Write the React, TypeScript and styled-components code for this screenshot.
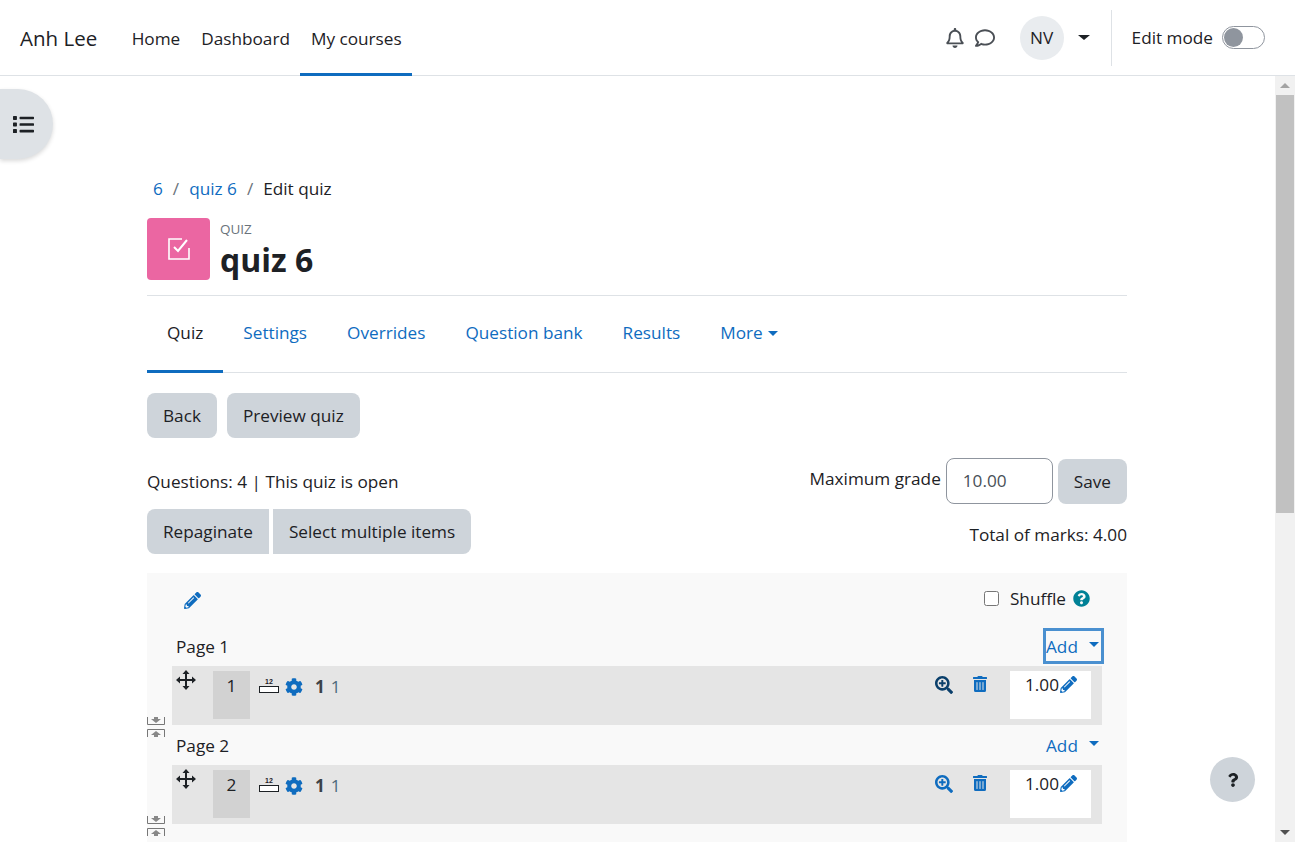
import styled, { createGlobalStyle } from "styled-components"
import { FaCog, FaList, FaPencilAlt, FaQuestion, FaQuestionCircle, FaRegBell, FaRegComment, FaSearchPlus, FaTrashAlt } from "react-icons/fa"

const BLUE = "#0f6cbf"

const GlobalStyle = createGlobalStyle`
    html, body {
        margin: 0;
        height: 100%;
        overflow: hidden;
    }
    body {
        font-family: "Open Sans", "Noto Sans", "Liberation Sans", sans-serif;
        font-size: 17.2px;
        color: #1d2125;
        background: #fff;
    }
`

function MoveIcon() {
    return (
        <svg width="20" height="20" viewBox="0 0 20 20" fill="#1d2125">
            <rect x="9" y="3" width="2" height="14" />
            <rect x="3" y="9" width="14" height="2" />
            <path d="M10 0l3.5 4h-7zM10 20l-3.5-4h7zM0 10l4-3.5v7zM20 10l-4 3.5v-7z" />
        </svg>
    )
}

function PageNumberIcon() {
    return (
        <svg width="20" height="16" viewBox="0 0 20 16">
            <text x="10" y="6" fontSize="7" fontWeight="700" textAnchor="middle" fontFamily="Liberation Sans" fill="#1d2125">12</text>
            <rect x="0.5" y="8.5" width="19" height="6" fill="#fff" stroke="#1d2125" />
        </svg>
    )
}

function SplitIcon({ up }: { up?: boolean }) {
    return (
        <svg width="18" height="8" viewBox="0 0 18 8" fill="none">
            {up ? (
                <>
                    <path d="M0.5 8V0.5H17.5V8" stroke="#777" />
                    <path d="M9 2l5 4H11v2H7V6H4z" fill="#888" />
                </>
            ) : (
                <>
                    <path d="M0.5 0V7.5H17.5V0" stroke="#777" />
                    <path d="M9 6l5-4H11V0H7v2H4z" fill="#888" />
                </>
            )}
        </svg>
    )
}

function QuizIcon() {
    return (
        <svg width="24" height="24" viewBox="0 0 24 24" fill="none" stroke="#fff" strokeWidth="1.6">
            <path d="M15 2H2v20h20V11" />
            <path d="M7 10l4 4 9-11" strokeWidth="2" />
        </svg>
    )
}

type Question = { slot: number; dark?: boolean }

function QuestionBlock({ slot, dark }: Question) {
    return (
        <>
            <PageRow>
                <PageLabel>Page {slot}</PageLabel>
                <AddMenu $focused={dark}>Add<Caret /></AddMenu>
            </PageRow>
            <SlotRow>
                <MoveHandle><MoveIcon /></MoveHandle>
                <SlotNumber>{slot}</SlotNumber>
                <PageNumberWrap><PageNumberIcon /></PageNumberWrap>
                <CogLink><FaCog /></CogLink>
                <QuestionName><strong>1</strong><span>1</span></QuestionName>
                <PreviewLink $dark={dark}><FaSearchPlus /></PreviewLink>
                <TrashLink><FaTrashAlt /></TrashLink>
                <MarkBox>1.00<MarkPen><FaPencilAlt /></MarkPen></MarkBox>
                <SplitIcons>
                    <SplitIcon />
                    <SplitIcon up />
                </SplitIcons>
            </SlotRow>
        </>
    )
}

export default function App() {
    return (
        <Page>
            <GlobalStyle />
            <Navbar>
                <Brand>Anh Lee</Brand>
                <PrimaryNav>
                    <NavItem>Home</NavItem>
                    <NavItem>Dashboard</NavItem>
                    <NavItem $active>My courses</NavItem>
                </PrimaryNav>
                <NavRight>
                    <NavIcon><FaRegBell /></NavIcon>
                    <NavIcon><FaRegComment /></NavIcon>
                    <Avatar>NV</Avatar>
                    <UserCaret />
                    <Divider />
                    <EditLabel>Edit mode</EditLabel>
                    <Toggle><ToggleKnob /></Toggle>
                </NavRight>
            </Navbar>

            <Body>
                <Scroller>
                    <DrawerToggle><FaList /></DrawerToggle>
                    <Content>
                        <Breadcrumb>
                            <Crumb>6</Crumb>
                            <Slash>/</Slash>
                            <Crumb>quiz 6</Crumb>
                            <Slash>/</Slash>
                            <span>Edit quiz</span>
                        </Breadcrumb>
                        <Heading>
                            <ActivityIcon><QuizIcon /></ActivityIcon>
                            <div>
                                <ActivityType>QUIZ</ActivityType>
                                <Title>quiz 6</Title>
                            </div>
                        </Heading>
                        <Tabs>
                            <Tab $active>Quiz</Tab>
                            <Tab>Settings</Tab>
                            <Tab>Overrides</Tab>
                            <Tab>Question bank</Tab>
                            <Tab>Results</Tab>
                            <Tab>More<TabCaret /></Tab>
                        </Tabs>
                        <ActionRow>
                            <Button>Back</Button>
                            <Button>Preview quiz</Button>
                        </ActionRow>
                        <InfoRow>
                            <InfoText>Questions: 4 | This quiz is open</InfoText>
                            <GradeForm>
                                <GradeLabel>Maximum grade</GradeLabel>
                                <GradeInput>10.00</GradeInput>
                                <Button>Save</Button>
                            </GradeForm>
                        </InfoRow>
                        <ToolRow>
                            <JoinedButtons>
                                <Button>Repaginate</Button>
                                <Button>Select multiple items</Button>
                            </JoinedButtons>
                            <Total>Total of marks: 4.00</Total>
                        </ToolRow>
                        <Section>
                            <SectionHead>
                                <SectionPen><FaPencilAlt /></SectionPen>
                                <Shuffle>
                                    <ShuffleBox type="checkbox" />
                                    Shuffle
                                    <HelpIcon><FaQuestionCircle /></HelpIcon>
                                </Shuffle>
                            </SectionHead>
                            <QuestionBlock slot={1} dark />
                            <QuestionBlock slot={2} />
                        </Section>
                    </Content>
                    <HelpButton><FaQuestion /></HelpButton>
                </Scroller>
                <Scrollbar>
                    <ArrowUp />
                    <Thumb />
                    <ArrowDown />
                </Scrollbar>
            </Body>
        </Page>
    )
}

const Page = styled.div`
    height: 842px;
    display: flex;
    flex-direction: column;
    overflow: hidden;
`

const Navbar = styled.header`
    height: 75px;
    flex: none;
    display: flex;
    align-items: stretch;
    border-bottom: 1px solid #dee2e6;
    padding: 0 30px 0 20px;
`

const Brand = styled.div`
    font-size: 20.5px;
    line-height: 77px;
    margin-right: 24px;
`

const PrimaryNav = styled.nav`
    display: flex;
`

const NavItem = styled.div<{ $active?: boolean }>`
    padding: 0 10.5px;
    line-height: 77px;
    border-bottom: 3px solid ${p => (p.$active ? BLUE : "transparent")};
    margin-bottom: -1px;
`

const NavRight = styled.div`
    margin-left: auto;
    display: flex;
    align-items: center;
`

const NavIcon = styled.div`
    width: 20px;
    height: 22px;
    margin-right: 10px;
    color: #4a4f55;
    font-size: 20px;
    display: flex;
    align-items: center;
    justify-content: center;
`

const Avatar = styled.div`
    width: 44px;
    height: 44px;
    border-radius: 50%;
    background: #e9ecef;
    margin-left: 15px;
    display: flex;
    align-items: center;
    justify-content: center;
`

const UserCaret = styled.div`
    margin-left: 14px;
    border-top: 5px solid #1d2125;
    border-left: 6px solid transparent;
    border-right: 6px solid transparent;
`

const Divider = styled.div`
    width: 1px;
    height: 56px;
    background: #dee2e6;
    margin: 0 20px 0 21px;
`

const EditLabel = styled.div`
    margin-right: 9px;
`

const Toggle = styled.div`
    width: 43px;
    height: 23px;
    border: 1px solid #8f959e;
    border-radius: 12px;
    box-sizing: border-box;
    padding: 1px;
`

const ToggleKnob = styled.div`
    width: 19px;
    height: 19px;
    border-radius: 50%;
    background: #8f959e;
`

const Body = styled.div`
    flex: 1;
    display: flex;
    min-height: 0;
`

const Scroller = styled.main`
    flex: 1;
    position: relative;
    overflow: hidden;
`

const DrawerToggle = styled.div`
    position: absolute;
    left: 0;
    top: 13px;
    width: 53px;
    height: 70px;
    background: #dee2e6;
    border-radius: 0 35px 35px 0;
    box-shadow: 0 2px 4px rgba(0, 0, 0, 0.15);
    display: flex;
    align-items: center;
    padding-left: 13px;
    box-sizing: border-box;
    font-size: 21px;
    color: #1d2125;
`

const Content = styled.div`
    width: 980px;
    margin-left: 147px;
    padding-top: 100px;
`

const Breadcrumb = styled.div`
    display: flex;
    height: 26px;
    line-height: 26px;
    padding-left: 6px;
`

const Crumb = styled.span`
    color: ${BLUE};
`

const Slash = styled.span`
    color: #6a737b;
    margin: 0 10px;
`

const Heading = styled.div`
    display: flex;
    gap: 10px;
    margin-top: 16px;
    height: 77px;
    border-bottom: 1px solid #dee2e6;
`

const ActivityIcon = styled.div`
    width: 63px;
    height: 62px;
    background: #eb66a2;
    border-radius: 4px;
    display: flex;
    align-items: center;
    justify-content: center;
`

const ActivityType = styled.div`
    font-size: 13.5px;
    color: #6a737b;
    line-height: 20px;
    margin-top: 1px;
`

const Title = styled.h1`
    margin: 0;
    font-size: 32px;
    font-weight: 700;
    line-height: 41px;
`

const Tabs = styled.div`
    display: flex;
    height: 76px;
    border-bottom: 1px solid #dee2e6;
`

const Tab = styled.div<{ $active?: boolean }>`
    padding: 0 20px;
    line-height: 73px;
    height: 77px;
    box-sizing: border-box;
    color: ${p => (p.$active ? "#1d2125" : BLUE)};
    border-bottom: 3px solid ${p => (p.$active ? BLUE : "transparent")};
`

const TabCaret = styled.span`
    display: inline-block;
    margin-left: 5px;
    vertical-align: 3px;
    border-top: 5px solid ${BLUE};
    border-left: 5px solid transparent;
    border-right: 5px solid transparent;
`

const Button = styled.div`
    height: 45px;
    line-height: 45px;
    padding: 0 16px;
    background: #ced4da;
    border-radius: 8px;
    white-space: nowrap;
`

const ActionRow = styled.div`
    display: flex;
    gap: 10px;
    margin-top: 20px;
`

const InfoRow = styled.div`
    display: flex;
    justify-content: space-between;
    align-items: center;
    margin-top: 20px;
    height: 46px;
`

const InfoText = styled.div``

const GradeForm = styled.div`
    display: flex;
    align-items: center;
`

const GradeLabel = styled.div`
    margin: -6px 5px 0 0;
`

const GradeInput = styled.div`
    width: 107px;
    height: 46px;
    box-sizing: border-box;
    border: 1px solid #8f959e;
    border-radius: 8px;
    padding-left: 16px;
    line-height: 44px;
    color: #495057;
    margin-right: 5px;
`

const ToolRow = styled.div`
    display: flex;
    justify-content: space-between;
    margin-top: 5px;
`

const JoinedButtons = styled.div`
    display: flex;
    gap: 4px;
    & > :first-child {
        border-radius: 8px 0 0 8px;
    }
    & > :last-child {
        border-radius: 0 8px 8px 0;
    }
`

const Total = styled.div`
    line-height: 24px;
    margin-top: 14px;
`

const Section = styled.section`
    background: #f9f9f9;
    margin-top: 19px;
    padding: 0 25px;
    height: 300px;
`

const SectionHead = styled.div`
    display: flex;
    justify-content: space-between;
    align-items: center;
    height: 53px;
`

const SectionPen = styled.div`
    color: ${BLUE};
    font-size: 17px;
    margin-left: 12px;
    display: flex;
    margin-top: 1px;
`

const Shuffle = styled.label`
    display: flex;
    align-items: center;
    margin: -3px 12px 0 0;
`

const ShuffleBox = styled.input`
    width: 15px;
    height: 15px;
    margin: 0 11px 0 0;
`

const HelpIcon = styled.span`
    color: #008196;
    font-size: 17px;
    display: flex;
    margin-left: 7px;
`

const PageRow = styled.div`
    display: flex;
    justify-content: space-between;
    align-items: center;
    height: 40px;
    & + div {
        margin-top: 0;
    }
    padding-left: 4px;
    width: 925px;
`

const PageLabel = styled.div``

const AddMenu = styled.div<{ $focused?: boolean }>`
    width: 61px;
    height: 36px;
    box-sizing: border-box;
    color: ${BLUE};
    display: flex;
    align-items: center;
    padding-left: 3px;
    margin-right: -3px;
    outline: ${p => (p.$focused ? "3px solid #4a90d0" : "none")};
    outline-offset: -3px;
`

const Caret = styled.span`
    margin-left: 11px;
    margin-top: -4px;
    border-top: 5px solid ${BLUE};
    border-left: 5px solid transparent;
    border-right: 5px solid transparent;
`

const SlotRow = styled.div`
    position: relative;
    width: 930px;
    height: 59px;
    background: #e5e5e5;
    display: flex;
    align-items: flex-start;
`

const MoveHandle = styled.div`
    width: 41px;
    padding: 4px 0 0 4px;
    box-sizing: border-box;
`

const SlotNumber = styled.div`
    width: 37px;
    height: 48px;
    margin-top: 5px;
    background: #d2d2d2;
    text-align: center;
    line-height: 30px;
`

const PageNumberWrap = styled.div`
    margin: 10px 0 0 9px;
`

const CogLink = styled.div`
    color: ${BLUE};
    font-size: 18px;
    margin: 12px 0 0 6px;
    display: flex;
`

const QuestionName = styled.div`
    margin: 7px 0 0 12px;
    flex: 1;
    line-height: 28px;
    color: #3c4247;
    & strong {
        margin-right: 6px;
    }
    & span {
        color: #4e6a7a;
    }
`

const PreviewLink = styled.div<{ $dark?: boolean }>`
    color: ${p => (p.$dark ? "#0a3f6b" : BLUE)};
    font-size: 18px;
    margin: 10px 0 0 0;
    display: flex;
`

const TrashLink = styled.div`
    color: ${BLUE};
    font-size: 16px;
    margin: 10px 0 0 19px;
    display: flex;
`

const MarkBox = styled.div`
    width: 81px;
    height: 48px;
    margin: 5px 11px 0 22px;
    background: #fff;
    box-sizing: border-box;
    padding-left: 15px;
    display: flex;
    align-items: flex-start;
    line-height: 28px;
`

const MarkPen = styled.span`
    color: ${BLUE};
    font-size: 17px;
    display: flex;
    margin: 5px 0 0 1px;
`

const SplitIcons = styled.div`
    position: absolute;
    left: -25px;
    bottom: -12px;
    display: flex;
    flex-direction: column;
    gap: 4px;
`

const HelpButton = styled.div`
    position: absolute;
    right: 20px;
    bottom: 40px;
    width: 45px;
    height: 45px;
    border-radius: 50%;
    background: #ced4da;
    display: flex;
    align-items: center;
    justify-content: center;
    font-size: 14px;
    color: #1d2125;
`

const Scrollbar = styled.div`
    width: 20px;
    flex: none;
    background: #f1f1f1;
    display: flex;
    flex-direction: column;
    align-items: center;
`

const Thumb = styled.div`
    width: 18px;
    height: 418px;
    background: #c1c1c1;
    margin-top: 7px;
`

const ArrowUp = styled.div`
    margin-top: 7px;
    border-bottom: 5px solid #a3a3a3;
    border-left: 5px solid transparent;
    border-right: 5px solid transparent;
`

const ArrowDown = styled.div`
    margin-top: auto;
    margin-bottom: 7px;
    border-top: 5px solid #505050;
    border-left: 5px solid transparent;
    border-right: 5px solid transparent;
`
